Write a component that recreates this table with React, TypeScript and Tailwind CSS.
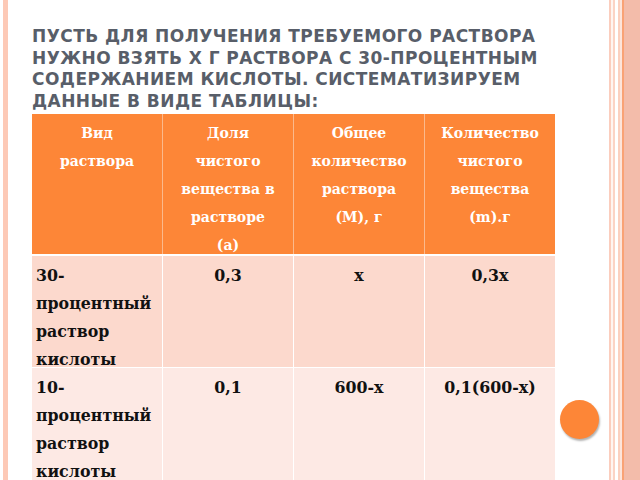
const header = [
  ["Вид", "раствора"],
  ["Доля", "чистого", "вещества в", "растворе", "(а)"],
  ["Общее", "количество", "раствора", "(M), г"],
  ["Количество", "чистого", "вещества", "(m).г"],
];

const rows = [
  {
    bg: "bg-[#fcd9cd]",
    cells: [["30-", "процентный", "раствор", "кислоты"], ["0,3"], ["x"], ["0,3x"]],
  },
  {
    bg: "bg-[#fde9e4]",
    cells: [["10-", "процентный", "раствор", "кислоты"], ["0,1"], ["600-x"], ["0,1(600-x)"]],
  },
];

const Lines = ({ lines }: { lines: string[] }) => (
  <>
    {lines.map((l) => (
      <div key={l} className="whitespace-nowrap">
        {l}
      </div>
    ))}
  </>
);

export default function App() {
  return (
    <div className="flex h-[480px] w-[640px] overflow-hidden bg-white">
      {/* left frame */}
      <div className="ml-[3px] w-[5px] shrink-0 bg-[#fdc9b6]" />

      <div className="flex min-w-0 flex-1 flex-col pl-[24px] pt-[26px]">
        <h1 className="whitespace-nowrap text-[17px] font-bold uppercase leading-[21.5px] tracking-[0.45px] text-[#585e69] [font-family:'DejaVu_Sans',sans-serif]">
          Пусть для получения требуемого раствора
          <br />
          нужно взять x г раствора с 30-процентным
          <br />
          содержанием кислоты. Систематизируем
          <br />
          данные в виде таблицы:
        </h1>

        <div className="mt-[2px] grid w-[523px] grid-cols-[130px_131px_131px_131px] font-bold leading-[28px] [font-family:'DejaVu_Serif',serif]">
          {header.map((lines, i) => (
            <div
              key={i}
              className={`h-[140px] bg-[#fd8637] pt-[5px] text-center text-[14px] text-white ${i > 0 ? "border-l border-[#fbb98c]" : ""}`}
            >
              <Lines lines={lines} />
            </div>
          ))}
          {rows.map((r, ri) =>
            r.cells.map((lines, ci) => (
              <div
                key={`${ri}-${ci}`}
                className={`h-[113px] ${r.bg} pt-[6px] text-[15.8px] text-[#111] ${ci === 0 ? "pl-[4px] text-left" : "border-l border-white text-center"} ${ri === 0 ? "border-t-2 border-t-white" : "border-t border-t-white"}`}
              >
                <Lines lines={lines} />
              </div>
            )),
          )}
        </div>
      </div>

      {/* right side: bullet + frame */}
      <div className="flex w-[40px] shrink-0 flex-col justify-end pb-[41px]">
        <div className="-ml-[9px] h-[39px] w-[39px] rounded-full bg-[#fd8637] shadow-[1px_2px_2px_rgba(0,0,0,0.3)]" />
      </div>
      <div className="flex shrink-0">
        <div className="w-[2px] bg-[#fbcdbd]" />
        <div className="w-[2px] bg-[#fff5f1]" />
        <div className="w-[2px] bg-[#fbd3c4]" />
        <div className="w-[3px] bg-white" />
        <div className="w-[2px] bg-[#fbd0bf]" />
        <div className="w-[2px] bg-[#fde4da]" />
        <div className="w-[2px] bg-[#f9a275]" />
        <div className="w-[16px] bg-[#f3bcaa]" />
      </div>
    </div>
  );
}
